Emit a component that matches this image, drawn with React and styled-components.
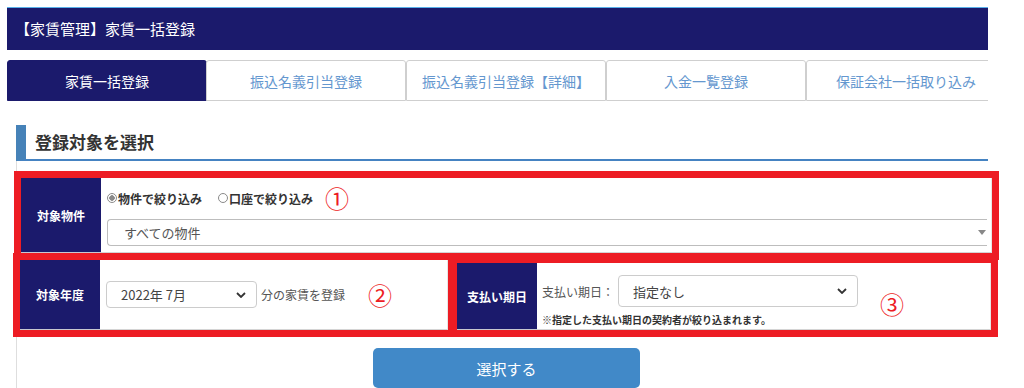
import styled, { createGlobalStyle } from "styled-components";

const navy = "#1b1a6c";
const red = "#ed1c24";

const GlobalStyle = createGlobalStyle`
	body {
		margin: 0;
		background: #fff;
		font-family: "Noto Sans CJK JP", "Noto Sans", sans-serif;
		overflow: hidden;
	}
`;

const tabs = ["家賃一括登録", "振込名義引当登録", "振込名義引当登録【詳細】", "入金一覧登録", "保証会社一括取り込み"];

const Chevron = () => (
	<svg width="10" height="6" viewBox="0 0 10 6">
		<path d="M1 1l4 4 4-4" fill="none" stroke="#333" strokeWidth="1.8" />
	</svg>
);

const App = () => {
	return (
		<>
			<GlobalStyle />
			<Page>
				<Header>【家賃管理】家賃一括登録</Header>
				<TabBar>
					{tabs.map((t, i) => (
						<Tab key={t} $active={i === 0}>
							{t}
						</Tab>
					))}
				</TabBar>
				<Heading>登録対象を選択</Heading>
				<Panel>
					<WideBox>
						<Label>対象物件</Label>
						<Cell $pad="9px 4px 6px 6px" $column>
							<RadioRow>
								<Radio>
									<Dot $checked />
									物件で絞り込み
								</Radio>
								<Radio>
									<Dot />
									口座で絞り込み
								</Radio>
								<Marker $offset={-4}>①</Marker>
							</RadioRow>
							<WideSelect>
								すべての物件
								<Triangle />
							</WideSelect>
						</Cell>
					</WideBox>
					<SplitRow>
						<YearBox>
							<Label>対象年度</Label>
							<Cell $pad="0 0 0 6px">
								<Select $width={151} $height={27}>
									2022年 7月
									<Chevron />
								</Select>
								<Plain>分の家賃を登録</Plain>
								<Marker $offset={19}>②</Marker>
							</Cell>
						</YearBox>
						<DueBox>
							<Label>支払い期日</Label>
							<Cell $pad="12px 0 0 5px" $top>
								<DueColumn>
									<DueRow>
										<Plain>支払い期日：</Plain>
										<Select $width={240} $height={32}>
											指定なし
											<Chevron />
										</Select>
									</DueRow>
									<Note>※指定した支払い期日の契約者が絞り込まれます。</Note>
								</DueColumn>
								<Marker $offset={22} $top={17}>③</Marker>
							</Cell>
						</DueBox>
					</SplitRow>
					<ButtonRow>
						<SubmitButton>選択する</SubmitButton>
					</ButtonRow>
				</Panel>
			</Page>
		</>
	);
};

const Page = styled.div`
	padding: 7px 0 0 7px;
	width: 981px;
`;

const Header = styled.div`
	background: ${navy};
	border-top: 1px solid #59b0ea;
	height: 42px;
	line-height: 42px;
	padding-left: 8px;
	color: #fff;
	font-size: 15px;
`;

const TabBar = styled.div`
	display: flex;
	margin-top: 10px;
	height: 41px;
	overflow: hidden;
`;

const Tab = styled.div`
	flex: 0 0 200px;
	box-sizing: border-box;
	display: flex;
	align-items: center;
	justify-content: center;
	font-size: 14px;
	border: 1px solid ${(p) => (p.$active ? navy : "#cfcfcf")};
	border-radius: 3px 3px 0 0;
	background: ${(p) => (p.$active ? navy : "#fff")};
	color: ${(p) => (p.$active ? "#fff" : "#6497cf")};
	margin-right: ${(p) => (p.$active ? "-1px" : "0")};
`;

const Heading = styled.h2`
	margin: 24px 0 0 9px;
	height: 34px;
	line-height: 34px;
	border-left: 10px solid #4682b8;
	border-bottom: 2px solid #4583c2;
	padding-left: 9px;
	font-size: 17px;
	font-weight: bold;
	color: #333;
`;

const Panel = styled.div`
	margin-left: 9px;
	border-left: 1px solid #dedede;
	padding-top: 10px;
	height: 217px;
`;

const RedBox = styled.div`
	box-sizing: border-box;
	border: 7px solid ${red};
	display: flex;
	flex-shrink: 0;
	background: #fff;
`;

const WideBox = styled(RedBox)`
	margin-left: -3px;
	width: 985px;
	height: 89px;
`;

const SplitRow = styled.div`
	display: flex;
	margin: -7px 0 0 -4px;
	width: 990px;
`;

const YearBox = styled(RedBox)`
	width: 442px;
	height: 84px;
`;

const DueBox = styled(RedBox)`
	width: 548px;
	height: 81px;
	margin: 3px 0 0 -5px;
`;

const Label = styled.div`
	flex: 0 0 80px;
	background: ${navy};
	color: #fff;
	font-size: 12px;
	font-weight: bold;
	display: flex;
	align-items: center;
	justify-content: center;
	border-bottom: 1px solid #c8c8d0;
`;

const Cell = styled.div`
	flex: 1;
	display: flex;
	flex-direction: ${(p) => (p.$column ? "column" : "row")};
	align-items: ${(p) => (p.$column ? "stretch" : p.$top ? "flex-start" : "center")};
	padding: ${(p) => p.$pad};
	border-bottom: 1px solid #d4d4d4;
	border-right: 1px solid #e6e6e6;
`;

const RadioRow = styled.div`
	display: flex;
	align-items: center;
	gap: 16px;
	height: 22px;
`;

const Radio = styled.label`
	display: flex;
	align-items: center;
	font-size: 12px;
	font-weight: bold;
	color: #333;
`;

const Dot = styled.span`
	width: 8px;
	height: 8px;
	border: 1px solid #8a8a8a;
	border-radius: 50%;
	margin-right: 1px;
	background: ${(p) => (p.$checked ? "radial-gradient(circle, #8a8a8a 0 2.5px, #fff 3px)" : "#fff")};
`;

const Marker = styled.span`
	font-size: 24px;
	line-height: 1;
	color: ${red};
	margin-left: ${(p) => p.$offset}px;
	margin-top: ${(p) => (p.$top ? `${p.$top}px` : "0")};
`;

const WideSelect = styled.div`
	margin-top: 10px;
	height: 28px;
	box-sizing: border-box;
	border: 1px solid #bdbdbd;
	border-right: none;
	border-radius: 4px 0 0 4px;
	padding-left: 16px;
	display: flex;
	align-items: center;
	font-size: 13px;
	color: #555;
`;

const Triangle = styled.span`
	margin-left: auto;
	margin-right: 1px;
	width: 0;
	height: 0;
	border-left: 4px solid transparent;
	border-right: 4px solid transparent;
	border-top: 5px solid #888;
`;

const Select = styled.div`
	box-sizing: border-box;
	width: ${(p) => p.$width}px;
	height: ${(p) => p.$height}px;
	border: 1px solid #cccccc;
	border-radius: 4px;
	padding: 0 10px 0 14px;
	display: flex;
	align-items: center;
	justify-content: space-between;
	font-size: 13px;
	color: #444;
`;

const Plain = styled.span`
	font-size: 12px;
	color: #555;
	margin: 0 4px;
`;

const DueColumn = styled.div`
	display: flex;
	flex-direction: column;
`;

const DueRow = styled.div`
	display: flex;
	align-items: center;
	margin-left: -4px;
`;

const Note = styled.div`
	margin-top: 5px;
	font-size: 10px;
	font-weight: bold;
	color: #333;
`;

const ButtonRow = styled.div`
	display: flex;
	justify-content: center;
	padding-left: 8px;
	margin-top: 11px;
`;

const SubmitButton = styled.button`
	width: 267px;
	height: 40px;
	border: none;
	border-radius: 5px;
	background: #4189c8;
	color: #fff;
	font-family: inherit;
	font-size: 15px;
`;

export default App;
